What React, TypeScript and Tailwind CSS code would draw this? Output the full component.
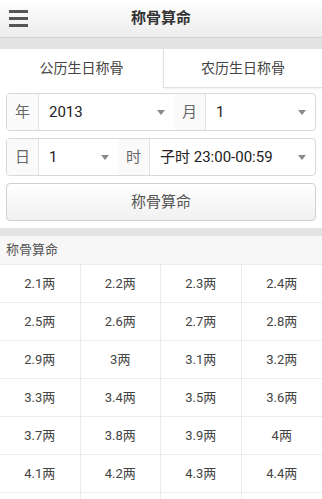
import { useState } from "react";

const weights = [
  "2.1", "2.2", "2.3", "2.4",
  "2.5", "2.6", "2.7", "2.8",
  "2.9", "3", "3.1", "3.2",
  "3.3", "3.4", "3.5", "3.6",
  "3.7", "3.8", "3.9", "4",
  "4.1", "4.2", "4.3", "4.4",
];

function Arrow() {
  return (
    <svg width="8" height="5" viewBox="0 0 8 5" className="shrink-0">
      <path d="M0 0 L8 0 L4 5 Z" fill="#8a8a8a" />
    </svg>
  );
}

function Label({ text }: { text: string }) {
  return (
    <div className="w-[31px] shrink-0 flex items-center justify-center text-[15px] text-[#666] bg-[#fafafa]">
      {text}
    </div>
  );
}

function Select({ value, className }: { value: string; className: string }) {
  return (
    <div
      className={`${className} flex items-center justify-between pl-[10px] pr-[9px] border-l border-[#e2e2e2] text-[15px] text-[#222]`}
    >
      <span>{value}</span>
      <Arrow />
    </div>
  );
}

export default function App() {
  const [tab, setTab] = useState(0);

  return (
    <div
      className="w-[322px] h-[499px] overflow-hidden bg-white text-[#333]"
      style={{ fontFamily: 'Roboto, "Noto Sans CJK SC", sans-serif' }}
    >
      <div className="h-[38px] grid grid-cols-[40px_1fr_40px] items-center bg-gradient-to-b from-white to-[#ececec] border-b border-[#d2d2d2]">
        <div className="pl-[9px] flex flex-col gap-[4px]">
          <div className="w-[19px] h-[3px] bg-[#555]" />
          <div className="w-[19px] h-[3px] bg-[#555]" />
          <div className="w-[19px] h-[3px] bg-[#555]" />
        </div>
        <div className="text-center text-[15px] font-bold text-[#333]">称骨算命</div>
        <div />
      </div>

      <div className="h-[11px] bg-[#e3e3e3]" />

      <div className="h-[39px] flex">
        <button
          onClick={() => setTab(0)}
          className="flex-1 flex items-center justify-center text-[14px] text-[#444] bg-white"
        >
          公历生日称骨
        </button>
        <button
          onClick={() => setTab(1)}
          className={`w-[159px] flex items-center justify-center text-[14px] text-[#444] bg-white border-l border-b border-[#e0e0e0] shadow-[0_1px_2px_rgba(0,0,0,0.06)] ${tab === 1 ? "" : ""}`}
        >
          农历生日称骨
        </button>
      </div>

      <div className="px-[6px] pt-[5px]">
        <div className="h-[38px] flex border border-[#d8d8d8] rounded-[4px] overflow-hidden">
          <Label text="年" />
          <Select value="2013" className="w-[136px]" />
          <Label text="月" />
          <Select value="1" className="flex-1" />
        </div>

        <div className="mt-[7px] h-[38px] flex border border-[#d8d8d8] rounded-[4px] overflow-hidden">
          <Label text="日" />
          <Select value="1" className="w-[80px]" />
          <Label text="时" />
          <Select value="子时 23:00-00:59" className="flex-1" />
        </div>

        <button className="mt-[7px] w-full h-[38px] border border-[#d0d0d0] rounded-[4px] bg-gradient-to-b from-white to-[#f1f1f1] text-[15px] text-[#555]">
          称骨算命
        </button>
      </div>

      <div className="mt-[7px] h-[8px] bg-[#e3e3e3]" />

      <div className="h-[29px] flex items-center pl-[6px] bg-[#f7f7f7] text-[13px] text-[#555] border-b border-[#ececec]">
        称骨算命
      </div>

      <div className="grid grid-cols-4">
        {weights.map((w, i) => (
          <div
            key={w}
            className={`h-[38px] flex items-center justify-center text-[13px] text-[#444] border-b border-[#ececec] ${
              i % 4 === 3 ? "" : "border-r"
            }`}
          >
            {w}两
          </div>
        ))}
        {[0, 1, 2, 3].map((i) => (
          <div
            key={`more-${i}`}
            className={`h-[38px] border-b border-[#ececec] ${i === 3 ? "" : "border-r"}`}
          />
        ))}
      </div>
    </div>
  );
}
